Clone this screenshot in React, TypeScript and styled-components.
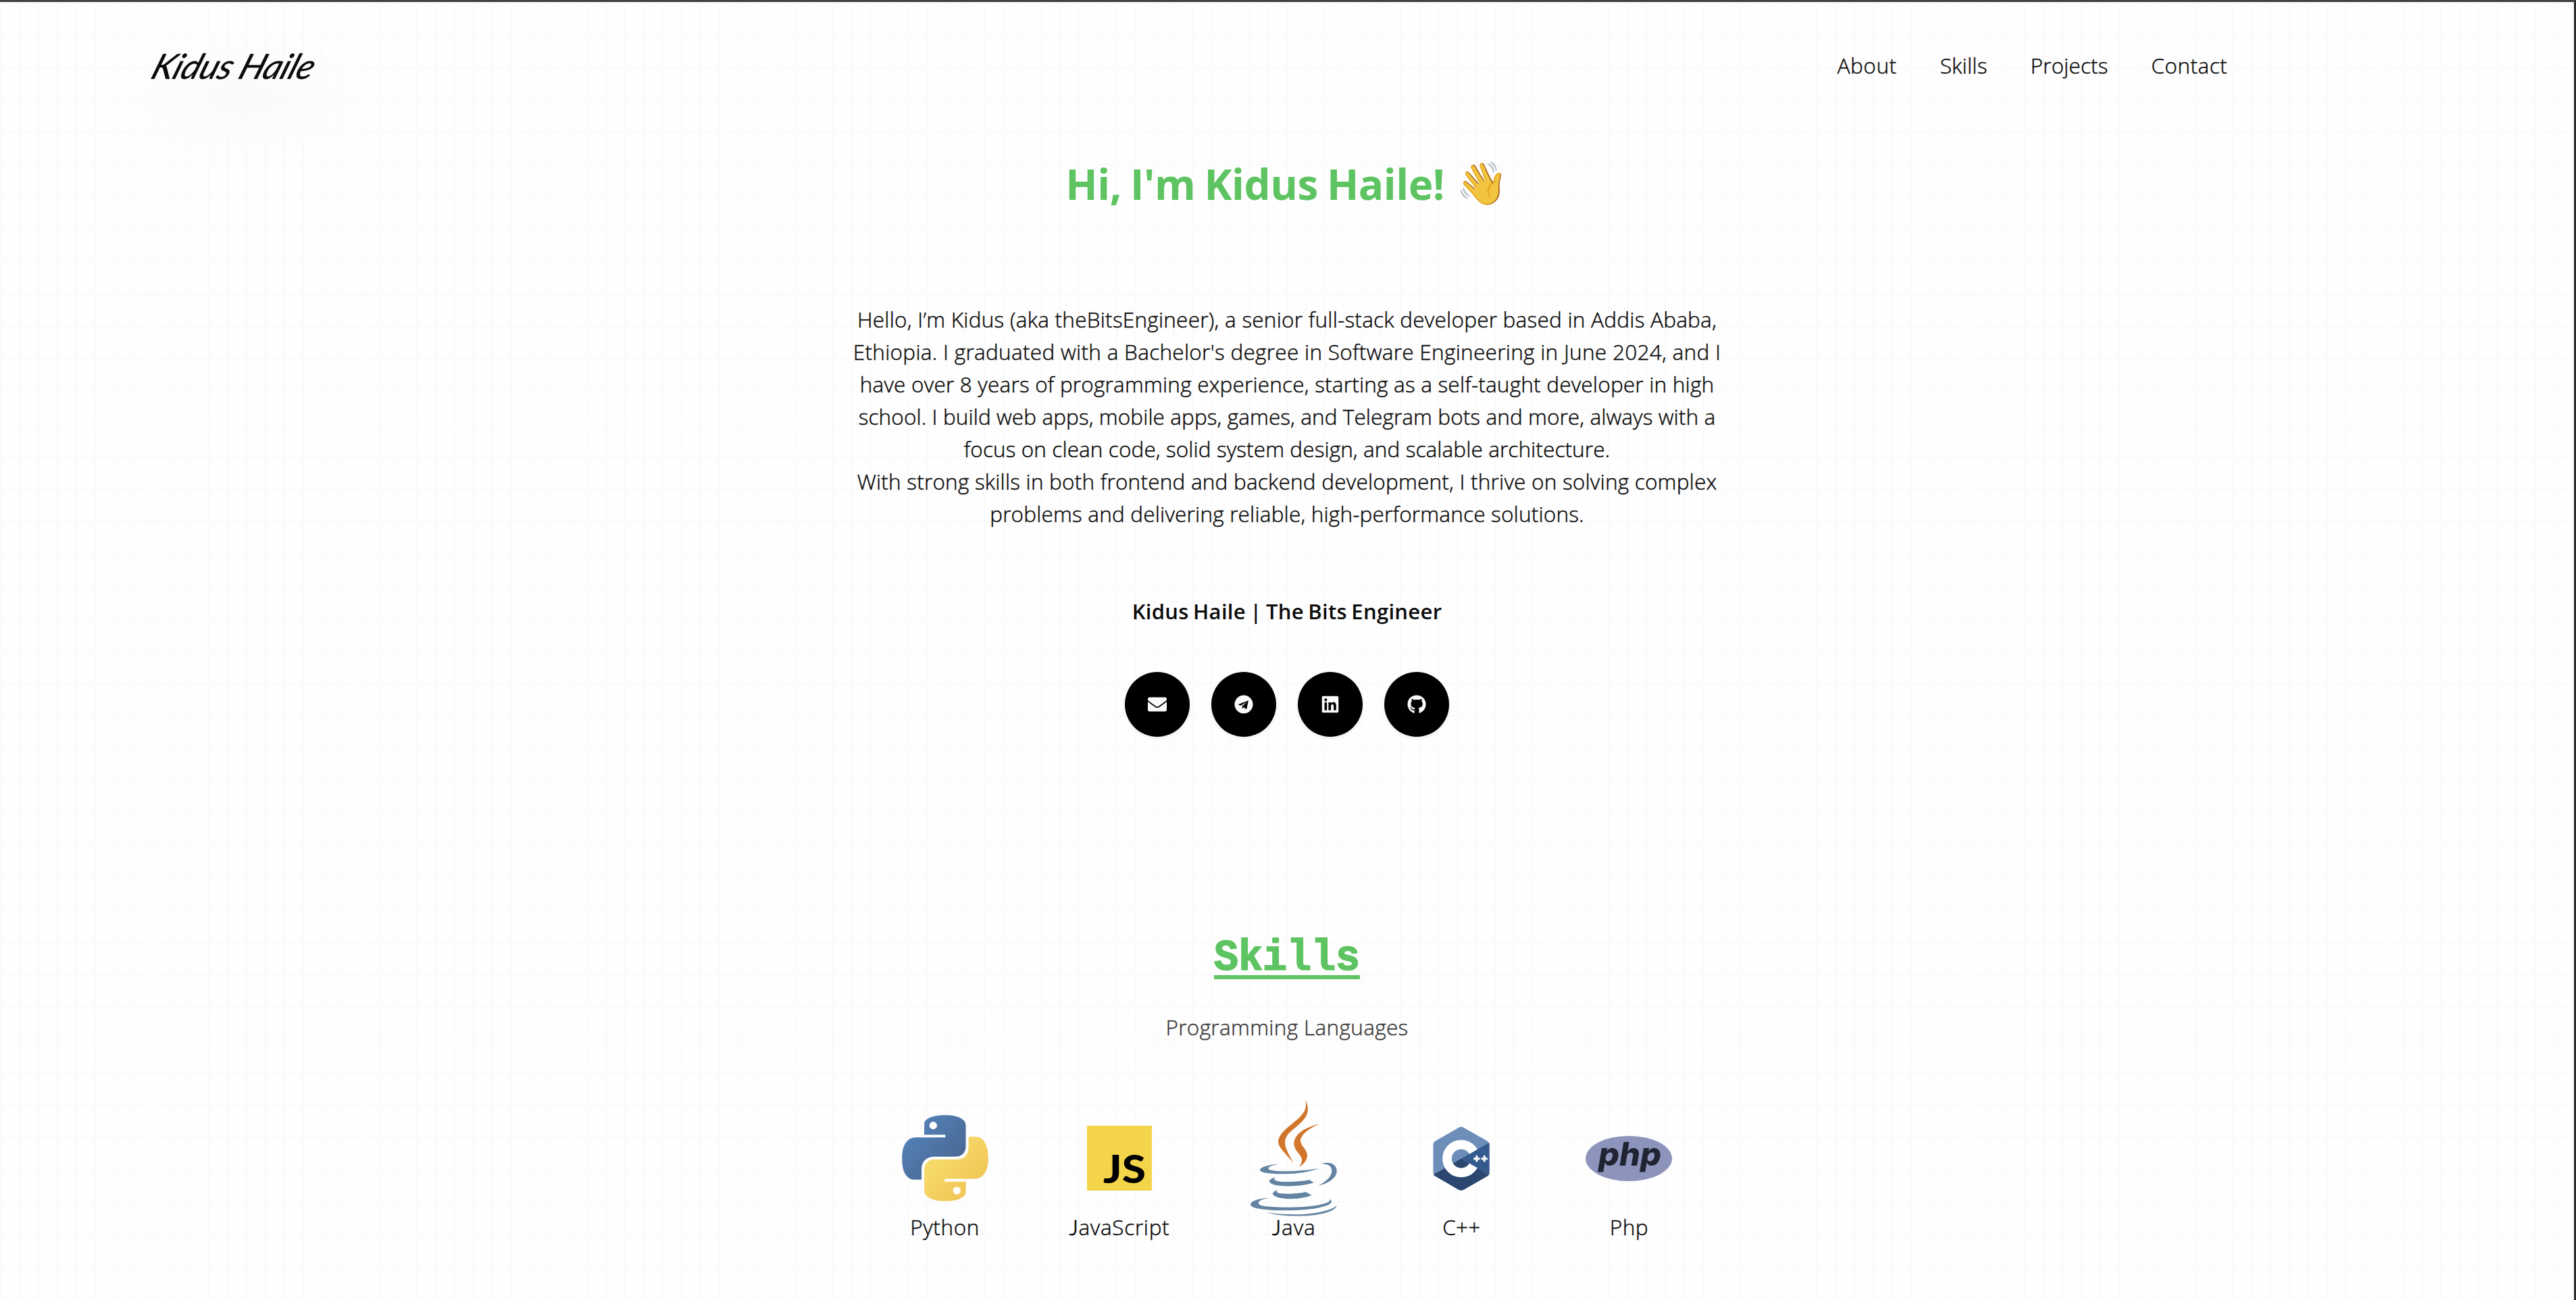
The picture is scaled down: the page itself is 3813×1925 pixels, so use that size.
import React from "react";
import styled, { createGlobalStyle } from "styled-components";
import { FaEnvelope, FaTelegram, FaLinkedin, FaGithub } from "react-icons/fa";

const green = "#5ec361";
const sans = '"Open Sans", "Noto Sans", sans-serif';

const GlobalStyle = createGlobalStyle`
  * { box-sizing: border-box; }
  body { margin: 0; background: #fefefe; overflow: hidden; }
`;

const Page = styled.div`
  width: 3813px;
  height: 1925px;
  overflow: hidden;
  border-top: 3px solid #424142;
  border-right: 3px solid #2b2b2b;
  background-color: #fefefe;
  background-image: linear-gradient(to right, #fafafa 2px, transparent 2px),
    linear-gradient(to bottom, #fafafa 2px, transparent 2px),
    radial-gradient(ellipse 180px 100px at 360px 142px, #fafafa 0%, #fcfcfc 50%, #fefefe 100%);
  background-size: 28px 48px, 28px 48px, 100% 100%;
  color: #0b0b0b;
  font-family: ${sans};
  font-size: 31.5px;
  font-weight: 330;
  line-height: 48px;
`;

const Header = styled.header`
  display: flex;
  justify-content: space-between;
  padding: 70px 513px 0 228px;
`;

const Signature = styled.a`
  font-family: Lato, sans-serif;
  font-size: 52px;
  font-style: italic;
  font-weight: 500;
  letter-spacing: -0.6px;
  transform: skewX(-20deg);
`;

const Nav = styled.nav`
  display: flex;
  gap: 64px;
`;

const Text = styled.span<{ $spacing?: number }>`
  display: block;
  white-space: nowrap;
  letter-spacing: ${(p) => p.$spacing ?? 0}px;
  -webkit-text-stroke: 0.45px currentColor;
`;

const Main = styled.main`
  display: flex;
  flex-direction: column;
  align-items: center;
`;

const Title = styled.h1`
  display: flex;
  gap: 17.5px;
  margin: 115px 0 141px;
  color: ${green};
  font-size: 62px;
  font-weight: 700;
  line-height: 72px;
  letter-spacing: -0.5px;
  word-spacing: -2.5px;
`;

const Wave = styled.span`
  font-family: "Noto Color Emoji", sans-serif;
  font-size: 62px;
  letter-spacing: 0;
  filter: saturate(0.85) brightness(0.97);
`;

const Bio = styled.div`
  text-align: center;
`;

const Name = styled.p`
  margin: 96px 0 66px;
  font-size: 31px;
  font-weight: 600;
  letter-spacing: 0.3px;
  word-spacing: -2px;
`;

const Socials = styled.div`
  display: flex;
  gap: 32px;
`;

const SocialLink = styled.a`
  display: grid;
  place-items: center;
  width: 96px;
  height: 96px;
  border-radius: 50%;
  background: #000;
  color: #fafafa;
  font-size: 28px;
  box-shadow: 0 2px 5px rgba(0, 0, 0, 0.08);
`;

const SkillsTitle = styled.h2`
  margin: 302px 0 0;
  color: ${green};
  font-family: "Liberation Mono", monospace;
  font-size: 60px;
  font-weight: 700;
  line-height: 54px;
`;

const SkillsWord = styled.span`
  display: block;
  transform: scaleY(1.08);
  transform-origin: 0 43px;
  -webkit-text-stroke: 1.6px ${green};
`;

const Underline = styled.div`
  height: 6px;
  margin-top: -3px;
  background: ${green};
`;

const Category = styled.h3`
  margin: 47px 0 106px;
  color: #3b3b3b;
  font-size: 31.5px;
  font-weight: 330;
`;

const SkillList = styled.div`
  display: flex;
  gap: 120px;
`;

const Skill = styled.div`
  display: flex;
  flex-direction: column;
  align-items: center;
  gap: 14px;
  min-width: 128px;
`;

const IconSlot = styled.div`
  display: flex;
  align-items: center;
  justify-content: center;
  height: 128px;
  svg { flex: none; display: block; overflow: visible; }
`;

const RoundJ = styled.span`
  font-family: Lato, sans-serif;
  font-weight: 300;
  -webkit-text-stroke: 0.9px currentColor;
`;

const PythonLogo = () => (
  <svg width="128" height="128" viewBox="75 92 384 385">
    <defs>
      <linearGradient id="pyBlue" x1="0" y1="0" x2="1" y2="1">
        <stop offset="0.1" stopColor="#5584bd" />
        <stop offset="0.85" stopColor="#48678f" />
      </linearGradient>
      <linearGradient id="pyYellow" x1="0" y1="0" x2="1" y2="1">
        <stop offset="0.1" stopColor="#f8e071" />
        <stop offset="0.85" stopColor="#f0c453" />
      </linearGradient>
    </defs>
    <path fill="url(#pyBlue)" d="M174 180V133C174 108 211 93 267 93C324 93 359 111 359 138V232C359 260 340 278 312 278H220C186 278 162 299 162 332V380H132C95 380 75 345 75 285C75 226 98 192 137 192H268V180Z" />
    <path fill="url(#pyYellow)" d="M371 189H403C439 189 459 228 459 285C459 343 436 376 398 376H265V389H359V432C359 460 324 476 267 476C211 476 174 458 174 430V335C174 309 192 290 220 290H320C350 290 371 268 371 238Z" />
    <circle cx="214" cy="139" r="17" fill="#fff" />
    <circle cx="319" cy="429" r="17" fill="#fff" />
  </svg>
);

const JavaScriptLogo = () => (
  <svg width="96" height="96" viewBox="0 0 96 96">
    <rect width="96" height="96" fill="#f4d549" />
    <text x="24" y="84.5" fontFamily="Lato, sans-serif" fontWeight="900" fontSize="58" textLength="63" lengthAdjust="spacingAndGlyphs">JS</text>
  </svg>
);

const JavaLogo = () => (
  <svg width="128" height="172" viewBox="153 58 384 516">
    <g fill="#d2762c">
      <path d="M397 58C424 112 396 145 352 180C292 226 293 250 345 338C300 286 278 268 276 243C277 214 308 186 335 165C384 127 406 104 397 58Z" />
      <path d="M460 163C400 190 375 217 375 240C378 264 405 277 405 305C403 330 386 345 367 356C383 336 385 322 375 306C361 286 347 275 346 250C348 212 385 182 460 163Z" />
    </g>
    <g fill="#6384a2">
      <path d="M285 341C250 343 195 354 195 369C200 385 270 387 330 385C380 383 430 373 455 360C410 370 350 374 300 374C250 374 232 368 232 362C232 353 260 345 285 341Z" />
      <path d="M466 342C502 328 536 341 536 373C536 405 495 430 455 437C490 420 513 397 514 372C514 350 496 340 466 342Z" />
      <path d="M263 401C240 408 236 415 237 421C245 437 290 441 335 440C375 439 410 433 434 425L416 413C370 421 320 423 285 420C255 417 255 408 263 401Z" />
      <path d="M274 457C255 463 251 470 252 476C258 490 300 498 335 497C370 496 405 489 425 481L399 466C370 473 320 476 290 473C266 470 266 463 274 457Z" />
      <path d="M236 493C200 492 153 505 153 522C155 540 220 548 320 548C430 547 513 530 513 508C513 503 510 500 506 498C512 512 470 525 400 531C320 537 230 534 200 526C178 518 185 500 236 493Z" />
      <path d="M225 557C270 565 340 568 400 564C470 558 520 543 536 526C533 548 480 567 400 572C330 575 260 570 225 557Z" />
    </g>
  </svg>
);

const CppLogo = () => (
  <svg width="84" height="95" viewBox="964 172 251 285">
    <defs>
      <clipPath id="cppHex">
        <path d="M1078 177Q1089 170 1100 177L1203 236Q1215 243 1215 256V375Q1215 388 1203 394L1100 453Q1089 459 1078 453L976 394Q964 388 964 375V256Q964 243 976 236Z" />
      </clipPath>
      <clipPath id="cppOpening">
        <path d="M964 172H1339L1089 315L1339 458H964Z" />
      </clipPath>
    </defs>
    <g clipPath="url(#cppHex)">
      <rect x="964" y="172" width="251" height="285" fill="#6c8eb9" />
      <path d="M964 387L1089 315L1215 388V460H964Z" fill="#2b4770" />
      <path d="M1089 315L1215 243V388Z" fill="#355a8d" />
    </g>
    <circle cx="1089" cy="315" r="62.5" clipPath="url(#cppOpening)" fill="none" stroke="#fff" strokeWidth="41" />
    <path d="M1144 315h28m-14-14v28M1178 315h28m-14-14v28" fill="none" stroke="#fff" strokeWidth="9" />
  </svg>
);

const PhpLogo = () => (
  <svg width="128" height="67" viewBox="0 0 128 67">
    <ellipse cx="64" cy="33.5" rx="64" ry="33.5" fill="#8d94bb" />
    <text x="19" y="44" fill="#1f2332" fontFamily="Inter, sans-serif" fontStyle="italic" fontWeight="800" fontSize="48" textLength="93" lengthAdjust="spacingAndGlyphs">php</text>
  </svg>
);

const navItems = [
  { label: "About", spacing: 0.55 },
  { label: "Skills", spacing: 0.25 },
  { label: "Projects", spacing: 0.1 },
  { label: "Contact", spacing: 0.5 },
];

const bio = [
  { text: "Hello, I’m Kidus (aka theBitsEngineer), a senior full-stack developer based in Addis Ababa,", spacing: 0.25 },
  { text: "Ethiopia. I graduated with a Bachelor's degree in Software Engineering in June 2024, and I", spacing: 0.3 },
  { text: "have over 8 years of programming experience, starting as a self-taught developer in high", spacing: 0.21 },
  { text: "school. I build web apps, mobile apps, games, and Telegram bots and more, always with a", spacing: 0.1 },
  { text: "focus on clean code, solid system design, and scalable architecture.", spacing: 0.11 },
  { text: "With strong skills in both frontend and backend development, I thrive on solving complex", spacing: 0.22 },
  { text: "problems and delivering reliable, high-performance solutions.", spacing: 0.2 },
];

const socials = [FaEnvelope, FaTelegram, FaLinkedin, FaGithub];

const skills = [
  { icon: <PythonLogo />, label: "Python", spacing: 0.6 },
  { icon: <JavaScriptLogo />, label: <><RoundJ>J</RoundJ>avaScript</>, spacing: 0.7 },
  { icon: <JavaLogo />, label: <><RoundJ>J</RoundJ>ava</>, spacing: 0.9 },
  { icon: <CppLogo />, label: "C++", spacing: 0.3 },
  { icon: <PhpLogo />, label: "Php", spacing: 0.5 },
];

export default function App() {
  return (
    <Page>
      <GlobalStyle />
      <Header>
        <Signature>Kidus Haile</Signature>
        <Nav>
          {navItems.map((n) => (
            <Text key={n.label} $spacing={n.spacing}>{n.label}</Text>
          ))}
        </Nav>
      </Header>
      <Main>
        <Title>
          <span>Hi, I'm Kidus Haile!</span>
          <Wave>👋</Wave>
        </Title>
        <Bio>
          {bio.map((l) => (
            <Text key={l.text} $spacing={l.spacing}>{l.text}</Text>
          ))}
        </Bio>
        <Name>Kidus Haile | The Bits Engineer</Name>
        <Socials>
          {socials.map((Icon, i) => (
            <SocialLink key={i}><Icon /></SocialLink>
          ))}
        </Socials>
        <SkillsTitle>
          <SkillsWord>Skills</SkillsWord>
          <Underline />
        </SkillsTitle>
        <Category><Text $spacing={0.35}>Programming Languages</Text></Category>
        <SkillList>
          {skills.map((s, i) => (
            <Skill key={i}>
              <IconSlot>{s.icon}</IconSlot>
              <Text $spacing={s.spacing}>{s.label}</Text>
            </Skill>
          ))}
        </SkillList>
      </Main>
    </Page>
  );
}
